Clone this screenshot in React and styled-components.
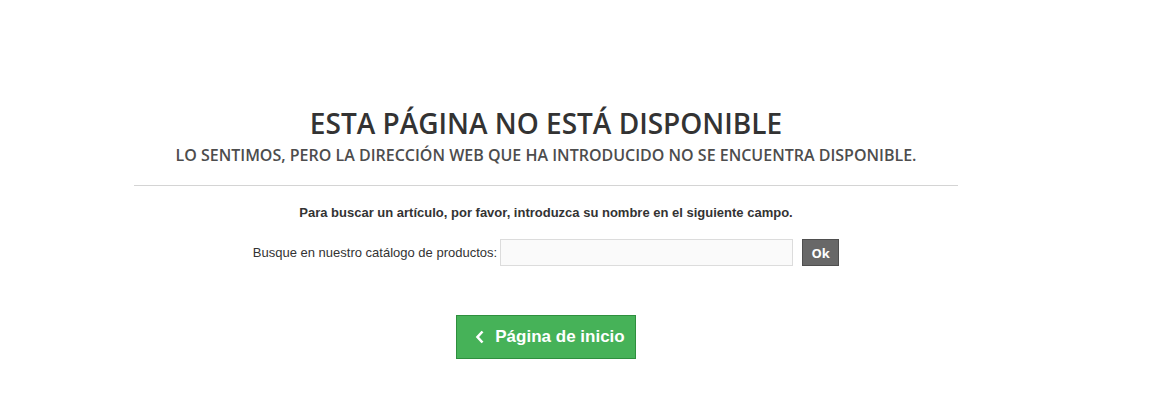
import styled, { createGlobalStyle } from "styled-components";

const GlobalStyle = createGlobalStyle`
  body {
    margin: 0;
    background: #fff;
    font-family: "Liberation Sans", Arial, sans-serif;
  }
`;

const Page = styled.div`
  padding: 104px 0 0 134px;
`;

const Content = styled.div`
  width: 824px;
  display: flex;
  flex-direction: column;
  align-items: center;
`;

const Title = styled.h1`
  margin: 0;
  font-family: "Open Sans", sans-serif;
  font-weight: 600;
  font-size: 28px;
  line-height: 38px;
  color: #333;
  text-transform: uppercase;
`;

const Subtitle = styled.h2`
  margin: 2px 0 0;
  font-family: "Open Sans", sans-serif;
  font-weight: 600;
  font-size: 16px;
  line-height: 22px;
  color: #4d4d4d;
  text-transform: uppercase;
`;

const Divider = styled.hr`
  align-self: stretch;
  margin: 19px 0 0;
  border: 0;
  border-top: 1px solid #d4d4d4;
`;

const Hint = styled.p`
  margin: 19px 0 0;
  font-size: 13px;
  font-weight: 700;
  color: #333;
  line-height: 16px;
`;

const SearchRow = styled.form`
  display: flex;
  align-items: center;
  margin: 18px 0 0;
`;

const Label = styled.label`
  font-size: 13px;
  color: #333;
  margin-right: 3px;
`;

const Field = styled.input`
  width: 293px;
  height: 27px;
  box-sizing: border-box;
  border: 1px solid #dcdcdc;
  background: #fafafa;
  margin: 0 9px 0 0;
  padding: 0 6px;
  outline: none;
`;

const OkButton = styled.button`
  width: 37px;
  height: 27px;
  box-sizing: border-box;
  border: 1px solid #4f4f4f;
  background: #686868;
  color: #fff;
  font-family: "Open Sans", sans-serif;
  font-weight: 700;
  font-size: 13px;
  padding: 0;
  cursor: pointer;
`;

const HomeButton = styled.a`
  margin-top: 49px;
  width: 180px;
  height: 44px;
  box-sizing: border-box;
  display: flex;
  align-items: center;
  justify-content: center;
  gap: 10px;
  background: #46b258;
  border: 1px solid #2e8f3e;
  color: #fff;
  font-weight: 700;
  font-size: 17px;
  text-decoration: none;
  padding-left: 8px;

  svg {
    width: 10px;
    height: 14px;
  }
`;

export default function App() {
  return (
    <>
      <GlobalStyle />
      <Page>
        <Content>
          <Title>Esta página no está disponible</Title>
          <Subtitle>
            Lo sentimos, pero la dirección web que ha introducido no se encuentra disponible.
          </Subtitle>
          <Divider />
          <Hint>
            Para buscar un artículo, por favor, introduzca su nombre en el siguiente campo.
          </Hint>
          <SearchRow onSubmit={(e) => e.preventDefault()}>
            <Label htmlFor="q">Busque en nuestro catálogo de productos:</Label>
            <Field id="q" type="text" />
            <OkButton type="submit">Ok</OkButton>
          </SearchRow>
          <HomeButton href="#">
            <svg viewBox="0 0 10 14" aria-hidden="true">
              <path d="M7.5 1.5 L2.5 7 L7.5 12.5" fill="none" stroke="#fff" strokeWidth="2.6" />
            </svg>
            Página de inicio
          </HomeButton>
        </Content>
      </Page>
    </>
  );
}
